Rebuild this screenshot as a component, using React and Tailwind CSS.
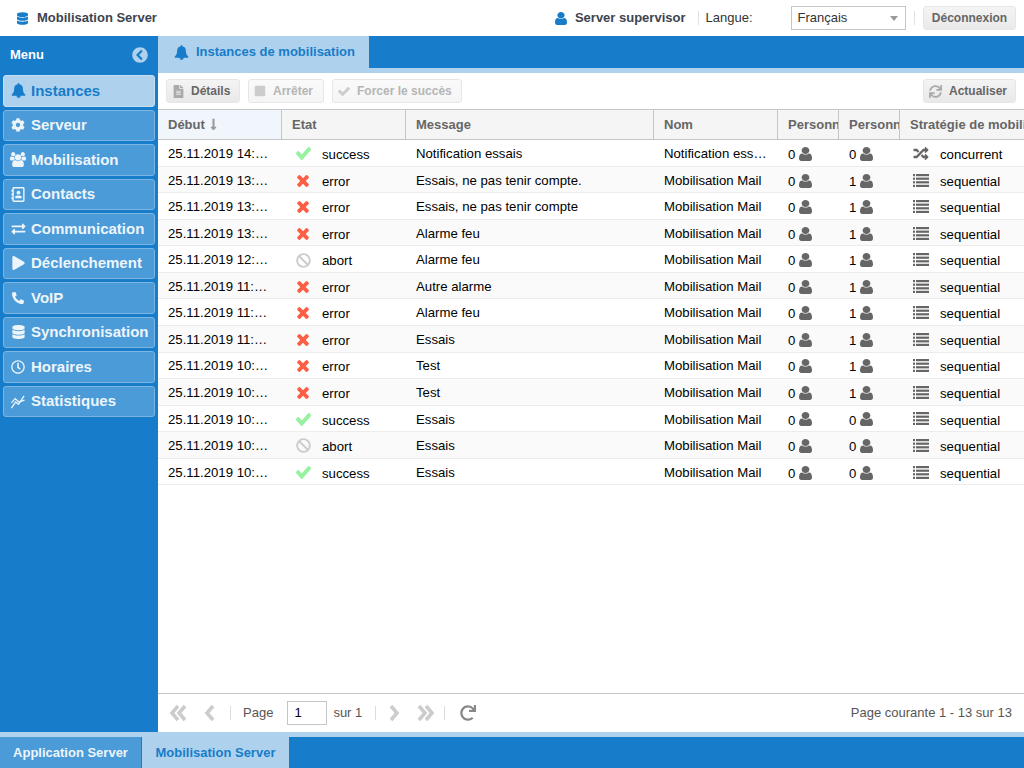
import React from 'react'
import {
  FaBan,
  FaChevronCircleLeft,
  FaCog,
  FaDatabase,
  FaExchangeAlt,
  FaFileAlt,
  FaLongArrowAltDown,
  FaPhoneAlt,
  FaPlay,
  FaRandom,
  FaRedo,
  FaRegAddressBook,
  FaRegClock,
  FaStop,
  FaSync,
} from 'react-icons/fa'

function BellIcon({ className }) {
  return (
    <svg viewBox="0 0 1792 1792" className={className} fill="currentColor">
      <path d="M912 1696q0-16-16-16-59 0-101.500-42.500t-42.500-101.500q0-16-16-16t-16 16q0 73 51.500 124.500t124.500 51.500q16 0 16-16zm816-288q0 52-38 90t-90 38h-448q0 106-75 181t-181 75-181-75-75-181h-448q-52 0-90-38t-38-90q50-42 91-88t85-119.500 74.500-158.500 50-206 19.500-260q0-152 117-282.500t307-158.500q-8-19-8-39 0-40 28-68t68-28 68 28 28 68q0 20-8 39 190 28 307 158.500t117 282.500q0 139 19.500 260t50 206 74.500 158.500 85 119.500 91 88z" />
    </svg>
  )
}

function UserIcon({ className }) {
  return (
    <svg viewBox="256 128 1280 1536" preserveAspectRatio="none" className={className} fill="currentColor">
      <path d="M1536 1399q0 109-62.500 187t-150.500 78h-854q-88 0-150.500-78t-62.500-187q0-85 8.500-160.500t31.500-152 58.500-131 94-89 134.500-34.500q131 128 313 128t313-128q76 0 134.500 34.500t94 89 58.500 131 31.500 152 8.500 160.500zm-256-887q0 159-112.500 271.500t-271.500 112.500-271.500-112.500-112.500-271.500 112.500-271.500 271.500-112.500 271.500 112.500 112.500 271.500z" />
    </svg>
  )
}

function UsersIcon({ className }) {
  return (
    <svg viewBox="0 0 1920 1792" className={className} fill="currentColor">
      <path d="M593 896q-162 5-265 128h-134q-82 0-138-40.500t-56-118.500q0-353 124-353 6 0 43.500 21t97.500 42.500 119 21.500q67 0 133-23-5 37-5 66 0 139 81 256zm1071 637q0 120-73 189.500t-194 69.500h-874q-121 0-194-69.500t-73-189.500q0-53 3.500-103.500t14-109 26.500-108.500 43-97.500 62-81 85.500-53.500 111.500-20q10 0 43 21.500t73 48 107 48 135 21.500 135-21.500 107-48 73-48 43-21.500q61 0 111.500 20t85.500 53.500 62 81 43 97.500 26.500 108.500 14 109 3.500 103.500zm-1024-1277q0 106-75 181t-181 75-181-75-75-181 75-181 181-75 181 75 75 181zm704 384q0 159-112.500 271.500t-271.500 112.500-271.500-112.500-112.500-271.500 112.500-271.500 271.500-112.500 271.500 112.500 112.500 271.500zm576 225q0 78-56 118.500t-138 40.500h-134q-103-123-265-128 81-117 81-256 0-29-5-66 66 23 133 23 59 0 119-21.500t97.500-42.500 43.500-21q124 0 124 353zm-128-609q0 106-75 181t-181 75-181-75-75-181 75-181 181-75 181 75 75 181z" />
    </svg>
  )
}

function CheckIcon({ className }) {
  return (
    <svg viewBox="121 334 1550 1188" preserveAspectRatio="none" className={className} fill="currentColor">
      <path d="M1671 566q0 40-28 68l-724 724-136 136q-28 28-68 28t-68-28l-136-136-362-362q-28-28-28-68t28-68l136-136q28-28 68-28t68 28l294 295 656-657q28-28 68-28t68 28l136 136q28 28 28 68z" />
    </svg>
  )
}

function TimesIcon({ className }) {
  return (
    <svg viewBox="296 360 1200 1200" className={className} fill="currentColor">
      <path d="M1490 1322q0 40-28 68l-136 136q-28 28-68 28t-68-28l-294-294-294 294q-28 28-68 28t-68-28l-136-136q-28-28-28-68t28-68l294-294-294-294q-28-28-28-68t28-68l136-136q28-28 68-28t68 28l294 294 294-294q28-28 68-28t68 28l136 136q28 28 28 68t-28 68l-294 294 294 294q28 28 28 68z" />
    </svg>
  )
}

function StatsIcon({ className }) {
  return (
    <svg viewBox="0 0 16 16" className={className} fill="none" stroke="currentColor" strokeWidth="1.4">
      <path d="M1 15 L5.500 8.500 L8.500 11 L14.500 2" />
      <path d="M1 9.500 L5 5 L9 8.500 L15 6.500" />
    </svg>
  )
}

function ListIcon() {
  return (
    <svg viewBox="0 0 16 13" className="h-[13px] w-[16px] text-[#666]" fill="currentColor">
      <rect x="0" y="0" width="2" height="2.200" />
      <rect x="3" y="0" width="13" height="2.200" />
      <rect x="0" y="3.600" width="2" height="2.200" />
      <rect x="3" y="3.600" width="13" height="2.200" />
      <rect x="0" y="7.200" width="2" height="2.200" />
      <rect x="3" y="7.200" width="13" height="2.200" />
      <rect x="0" y="10.800" width="2" height="2.200" />
      <rect x="3" y="10.800" width="13" height="2.200" />
    </svg>
  )
}

// pager arrows, heavier than the ones in the icon packs
function PagerArrow({ d, className }) {
  return (
    <svg viewBox="0 0 18 18" className={className} fill="none" stroke="#cccccc" strokeWidth="3.600">
      <path d={d} />
    </svg>
  )
}

const menu = [
  { label: 'Instances', icon: <BellIcon className="h-[15px] w-[15px]" />, active: true },
  { label: 'Serveur', icon: <FaCog className="h-[14px] w-[14px]" /> },
  { label: 'Mobilisation', icon: <UsersIcon className="h-[15px] w-[16px]" /> },
  { label: 'Contacts', icon: <FaRegAddressBook className="h-[15px] w-[14px] -scale-x-100" /> },
  { label: 'Communication', icon: <FaExchangeAlt className="h-[14px] w-[15px]" /> },
  { label: 'Déclenchement', icon: <FaPlay className="h-[14px] w-[13px]" /> },
  { label: 'VoIP', icon: <FaPhoneAlt className="h-[12px] w-[12px]" /> },
  { label: 'Synchronisation', icon: <FaDatabase className="h-[14px] w-[13px]" /> },
  { label: 'Horaires', icon: <FaRegClock className="h-[14px] w-[14px]" /> },
  { label: 'Statistiques', icon: <StatsIcon className="h-[15px] w-[16px]" /> },
]

const rows = [
  ['25.11.2019 14:12:08', 'success', 'Notification essais', 'Notification essais', 0, 0, 'concurrent'],
  ['25.11.2019 13:52:41', 'error', 'Essais, ne pas tenir compte.', 'Mobilisation Mail', 0, 1, 'sequential'],
  ['25.11.2019 13:47:15', 'error', 'Essais, ne pas tenir compte', 'Mobilisation Mail', 0, 1, 'sequential'],
  ['25.11.2019 13:21:33', 'error', 'Alarme feu', 'Mobilisation Mail', 0, 1, 'sequential'],
  ['25.11.2019 12:40:27', 'abort', 'Alarme feu', 'Mobilisation Mail', 0, 1, 'sequential'],
  ['25.11.2019 11:58:02', 'error', 'Autre alarme', 'Mobilisation Mail', 0, 1, 'sequential'],
  ['25.11.2019 11:32:50', 'error', 'Alarme feu', 'Mobilisation Mail', 0, 1, 'sequential'],
  ['25.11.2019 11:05:19', 'error', 'Essais', 'Mobilisation Mail', 0, 1, 'sequential'],
  ['25.11.2019 10:49:44', 'error', 'Test', 'Mobilisation Mail', 0, 1, 'sequential'],
  ['25.11.2019 10:44:36', 'error', 'Test', 'Mobilisation Mail', 0, 1, 'sequential'],
  ['25.11.2019 10:30:11', 'success', 'Essais', 'Mobilisation Mail', 0, 0, 'sequential'],
  ['25.11.2019 10:21:58', 'abort', 'Essais', 'Mobilisation Mail', 0, 0, 'sequential'],
  ['25.11.2019 10:02:23', 'success', 'Essais', 'Mobilisation Mail', 0, 0, 'sequential'],
]

function StatusIcon({ status }) {
  if (status === 'success') return <CheckIcon className="h-[13px] w-[15px] text-[#96f2a0]" />
  if (status === 'error') return <TimesIcon className="h-[12px] w-[12px] text-[#fb5f45]" />
  return <FaBan className="h-[15px] w-[15px] text-[#cccccc]" />
}

function ToolButton({ icon, label, disabled, className = '' }) {
  return (
    <div
      className={`flex h-6 items-center gap-[7px] rounded-[3px] border border-[#e6e6e6] bg-gradient-to-b text-xs font-bold ${
        disabled ? 'from-[#fafafa] to-[#f5f5f5] text-[#b5b5b5]' : 'from-[#f4f4f4] to-[#e9e9e9] text-[#666]'
      } ${className}`}
    >
      {icon}
      <span>{label}</span>
    </div>
  )
}

function HeaderCell({ children, className = '' }) {
  return (
    <div className={`flex h-full shrink-0 items-center overflow-hidden whitespace-nowrap border-r border-[#c5c5c5] pl-[10px] ${className}`}>
      {children}
    </div>
  )
}

function App() {
  return (
    <div className="flex h-[768px] w-[1024px] flex-col overflow-hidden bg-white font-['Liberation_Sans',Arial,sans-serif] text-[13px] text-black">
      <header className="flex h-9 shrink-0 items-center">
        <FaDatabase className="ml-[17px] h-[13px] w-[11px] text-[#177cc9]" />
        <span className="ml-[9px] text-[13px] font-bold text-[#3d4450]">Mobilisation Server</span>
        <UserIcon className="ml-[398px] h-[13px] w-[12px] text-[#177cc9]" />
        <span className="ml-2 text-[13px] font-bold text-[#3d4450]">Server supervisor</span>
        <span className="ml-3 h-[14px] w-px bg-[#e2e2e2]" />
        <span className="ml-[7px] w-[85px] text-[13px] text-[#333]">Langue:</span>
        <div className="flex h-6 w-[115px] items-center justify-between border border-[#c5c5c5] px-[6px] text-[#333]">
          <span>Français</span>
          <span className="mr-[1px] h-0 w-0 border-x-[4px] border-t-[5px] border-x-transparent border-t-[#999]" />
        </div>
        <span className="ml-2 h-[14px] w-px bg-[#e2e2e2]" />
        <div className="ml-2 flex h-6 w-[93px] items-center justify-center rounded-[3px] border border-[#e6e6e6] bg-gradient-to-b from-[#f4f4f4] to-[#e9e9e9] pl-px text-xs font-bold text-[#666]">
          Déconnexion
        </div>
      </header>

      <div className="flex min-h-0 flex-1">
        <aside className="flex w-[158px] shrink-0 flex-col bg-[#177cc9] px-[3px]">
          <div className="flex h-[36px] shrink-0 items-center justify-between pl-[7px] pr-[7px] pt-[2px] text-[13px] font-bold text-white">
            <span>Menu</span>
            <FaChevronCircleLeft className="h-4 w-4 text-[#aed2ee]" />
          </div>
          <nav className="mt-[3px] flex flex-col gap-[3px]">
            {menu.map((item) => (
              <div
                key={item.label}
                className={`flex h-[31.5px] items-center rounded-[3px] border text-[15px] font-bold ${
                  item.active
                    ? 'border-[#c4def3] bg-[#aed2ee] text-[#177cc9]'
                    : 'border-[#7db5e2] bg-[#4b9bd8] text-[#edf5fb]'
                }`}
              >
                <span className="flex w-[27px] shrink-0 justify-center pl-px">{item.icon}</span>
                <span>{item.label}</span>
              </div>
            ))}
          </nav>
        </aside>

        <main className="flex min-w-0 flex-1 flex-col">
          <div className="flex h-[32px] shrink-0 bg-[#177cc9]">
            <div className="flex h-[32px] w-[211px] items-center gap-[7px] bg-[#aed2ee] pl-[16px] text-[13px] font-bold text-[#177cc9]">
              <BellIcon className="h-[15px] w-[15px]" />
              Instances de mobilisation
            </div>
          </div>
          <div className="h-[5px] shrink-0 bg-[#aed2ee]" />

          <div className="flex h-[36px] shrink-0 items-center gap-2 pl-2 pr-2">
            <ToolButton icon={<FaFileAlt className="h-[13px] w-[11px] text-[#aaa]" />} label="Détails" className="w-[74px] pl-[6px]" />
            <ToolButton icon={<FaStop className="h-[12px] w-[12px] text-[#ccc]" />} label="Arrêter" disabled className="w-[76px] pl-[5px]" />
            <ToolButton icon={<CheckIcon className="h-[9px] w-[12px] text-[#ccc]" />} label="Forcer le succès" disabled className="w-[130px] pl-[5px]" />
            <ToolButton icon={<FaSync className="h-[13px] w-[13px] text-[#aaa]" />} label="Actualiser" className="ml-auto w-[93px] gap-[5px] pl-[5px]" />
          </div>

          <div className="flex h-[31px] shrink-0 items-center border-y border-[#c5c5c5] bg-[#f5f5f5] text-[13px] font-bold text-[#666]">
            <HeaderCell className="w-[124px] gap-1 bg-[#f0f6fc]">
              Début <FaLongArrowAltDown className="h-[13px] w-[9px] text-[#999]" />
            </HeaderCell>
            <HeaderCell className="w-[124px]">Etat</HeaderCell>
            <HeaderCell className="w-[248px]">Message</HeaderCell>
            <HeaderCell className="w-[124px]">Nom</HeaderCell>
            <HeaderCell className="w-[61px]">Personnes</HeaderCell>
            <HeaderCell className="w-[61px]">Personnes</HeaderCell>
            <HeaderCell className="w-[124px] border-r-0">Stratégie de mobilisation</HeaderCell>
          </div>

          <div className="flex-1 pt-[0.2px]">
            {rows.map((row, i) => (
              <div
                key={i}
                className={`flex h-[26.55px] items-center border-b border-[#ececec] text-[13.2px] ${i % 2 ? 'bg-[#fafafa]' : 'bg-white'}`}
              >
                <div className="w-[124px] shrink-0 truncate px-[10px] pt-[2px]">{row[0]}</div>
                <div className="flex w-[124px] shrink-0 items-center pt-[2px]">
                  <span className="flex w-[40px] shrink-0 justify-center pl-[2px]">
                    <StatusIcon status={row[1]} />
                  </span>
                  <span className="pt-[2px]">{row[1]}</span>
                </div>
                <div className="w-[248px] shrink-0 truncate px-[10px] pt-[2px]">{row[2]}</div>
                <div className="w-[124px] shrink-0 truncate px-[10px] pt-[2px]">{row[3]}</div>
                <div className="flex w-[61px] shrink-0 items-center gap-1 pl-[10px] pt-[2px]">
                  <span className="pt-[2px]">{row[4]}</span> <UserIcon className="h-[14px] w-[13px] text-[#666]" />
                </div>
                <div className="flex w-[61px] shrink-0 items-center gap-1 pl-[10px] pt-[2px]">
                  <span className="pt-[2px]">{row[5]}</span> <UserIcon className="h-[14px] w-[13px] text-[#666]" />
                </div>
                <div className="flex w-[124px] shrink-0 items-center gap-[11px] pl-[13px] pt-[1px]">
                  {row[6] === 'concurrent' ? (
                    <FaRandom className="h-[15px] w-[16px] text-[#666]" />
                  ) : (
                    <ListIcon />
                  )}
                  <span className="pt-[3px]">{row[6]}</span>
                </div>
              </div>
            ))}
          </div>

          <div className="flex h-[39px] shrink-0 items-center border-t border-[#c5c5c5] text-[13px] text-[#555]">
            <PagerArrow d="M9 2 L3 9 L9 16 M16 2 L10 9 L16 16" className="ml-[11px] h-[18px] w-[18px]" />
            <PagerArrow d="M12 2 L6 9 L12 16" className="ml-[14px] h-[18px] w-[18px]" />
            <span className="ml-[11px] h-[14px] w-px bg-[#dcdcdc]" />
            <span className="ml-[12px]">Page</span>
            <div className="ml-[14px] flex h-[24px] w-[40px] items-center border border-[#c5c5c5] pl-[6px] text-black">1</div>
            <span className="ml-[6px]">sur 1</span>
            <span className="ml-[13px] h-[14px] w-px bg-[#dcdcdc]" />
            <PagerArrow d="M6 2 L12 9 L6 16" className="ml-[9px] h-[18px] w-[18px]" />
            <PagerArrow d="M3 2 L9 9 L3 16 M10 2 L16 9 L10 16" className="ml-[13px] h-[18px] w-[18px]" />
            <span className="ml-[10px] h-[14px] w-px bg-[#dcdcdc]" />
            <FaRedo className="ml-[15px] h-[16px] w-[16px] text-[#888]" />
            <span className="ml-auto mr-[12px]">Page courante 1 - 13 sur 13</span>
          </div>
        </main>
      </div>

      <div className="h-[5px] shrink-0 bg-[#aed2ee]" />
      <footer className="flex h-[31px] shrink-0 bg-[#177cc9] text-[13px] font-bold">
        <div className="flex w-[142px] items-center justify-center border-r border-[#177cc9] bg-[#4b9bd8] text-[#edf5fb]">Application Server</div>
        <div className="flex w-[147px] items-center justify-center bg-[#aed2ee] text-[#177cc9]">Mobilisation Server</div>
      </footer>
    </div>
  )
}

export default App
